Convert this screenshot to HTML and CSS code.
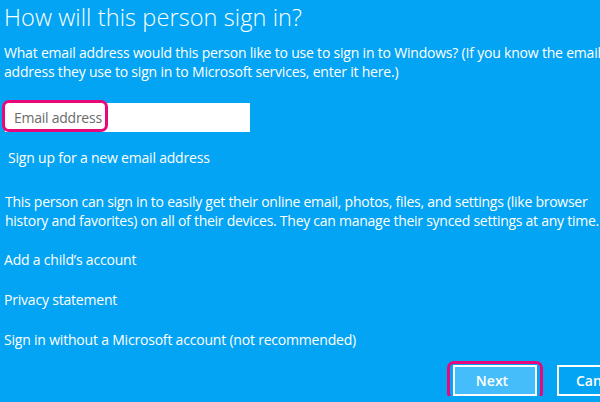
FILE: index.html
```html
<!DOCTYPE html>
<html lang="en">
<head>
  <meta charset="UTF-8" />
  <title>How will this person sign in?</title>
  <link rel="stylesheet" href="styles.css">
</head>
<body>
  <div class="page">
    <h1>How will this person sign in?</h1>
    <p class="intro">What email address would this person like to use to sign in to Windows? (If you know the email<br>address they use to sign in to Microsoft services, enter it here.)</p>
    <div class="field">
      <input type="text" class="email" placeholder="Email address" />
      <span class="ring ring-email"></span>
    </div>
    <a class="link signup" href="#">Sign up for a new email address</a>
    <p class="info">This person can sign in to easily get their online email, photos, files, and settings (like browser<br>history and favorites) on all of their devices. They can manage their synced settings at any time.</p>
    <a class="link" href="#">Add a child’s account</a>
    <a class="link" href="#">Privacy statement</a>
    <a class="link" href="#">Sign in without a Microsoft account (not recommended)</a>
    <div class="buttons">
      <div class="btn-wrap">
        <button class="btn primary">Next</button>
        <span class="ring ring-next"></span>
      </div>
      <button class="btn">Cancel</button>
    </div>
  </div>
</body>
</html>
```
FILE: styles.css
```css
html, body {
  margin: 0;
  overflow: hidden;
}
body {
  background-color: #03a4f4;
  color: #fff;
  font-family: 'Open Sans', 'Noto Sans', sans-serif;
  letter-spacing: -0.2px;
}
.page {
  width: 700px;
  padding: 0 0 0 4px;
  white-space: nowrap;
}
h1 {
  margin: 0;
  padding-top: 2px;
  font-size: 23.5px;
  font-weight: 300;
  line-height: 30px;
  letter-spacing: 0.1px;
}
p {
  margin: 0;
  font-size: 14px;
  line-height: 19px;
}
.intro {
  margin-top: 11px;
}
.field {
  position: relative;
  width: 246px;
  margin-top: 22px;
}
.email {
  display: block;
  box-sizing: border-box;
  width: 246px;
  height: 29px;
  border: none;
  padding: 0 0 0 9px;
  font-family: inherit;
  font-size: 14px;
  letter-spacing: -0.25px;
  background: #fff;
  border-left: 1px solid #888;
}
.email::placeholder {
  color: #6b6b6b;
}
.ring {
  position: absolute;
  border: 3px solid #e8087c;
  border-radius: 7px;
  pointer-events: none;
}
.ring-email {
  left: -2px;
  top: -3px;
  width: 100px;
  height: 26px;
}
.link {
  display: block;
  color: #fff;
  text-decoration: none;
  font-size: 14px;
  line-height: 19px;
}
.signup {
  margin: 16px 0 0 4px;
}
.info {
  margin: 25px 0 20px 1px;
  letter-spacing: -0.26px;
}
.link + .link {
  margin-top: 21px;
}
.buttons {
  display: flex;
  gap: 20px;
  margin: 16px 0 0 449px;
}
.btn-wrap {
  position: relative;
}
.btn {
  box-sizing: border-box;
  width: 84px;
  height: 31px;
  border: 2px solid #fff;
  background: transparent;
  color: #fff;
  font-family: inherit;
  font-size: 14px;
  font-weight: 600;
  text-align: left;
  padding-left: 17px;
}
.primary {
  background: #45bdfa;
  text-align: center;
  padding-left: 0;
}
.ring-next {
  left: -6px;
  top: -4px;
  width: 90px;
  height: 33px;
}
```
